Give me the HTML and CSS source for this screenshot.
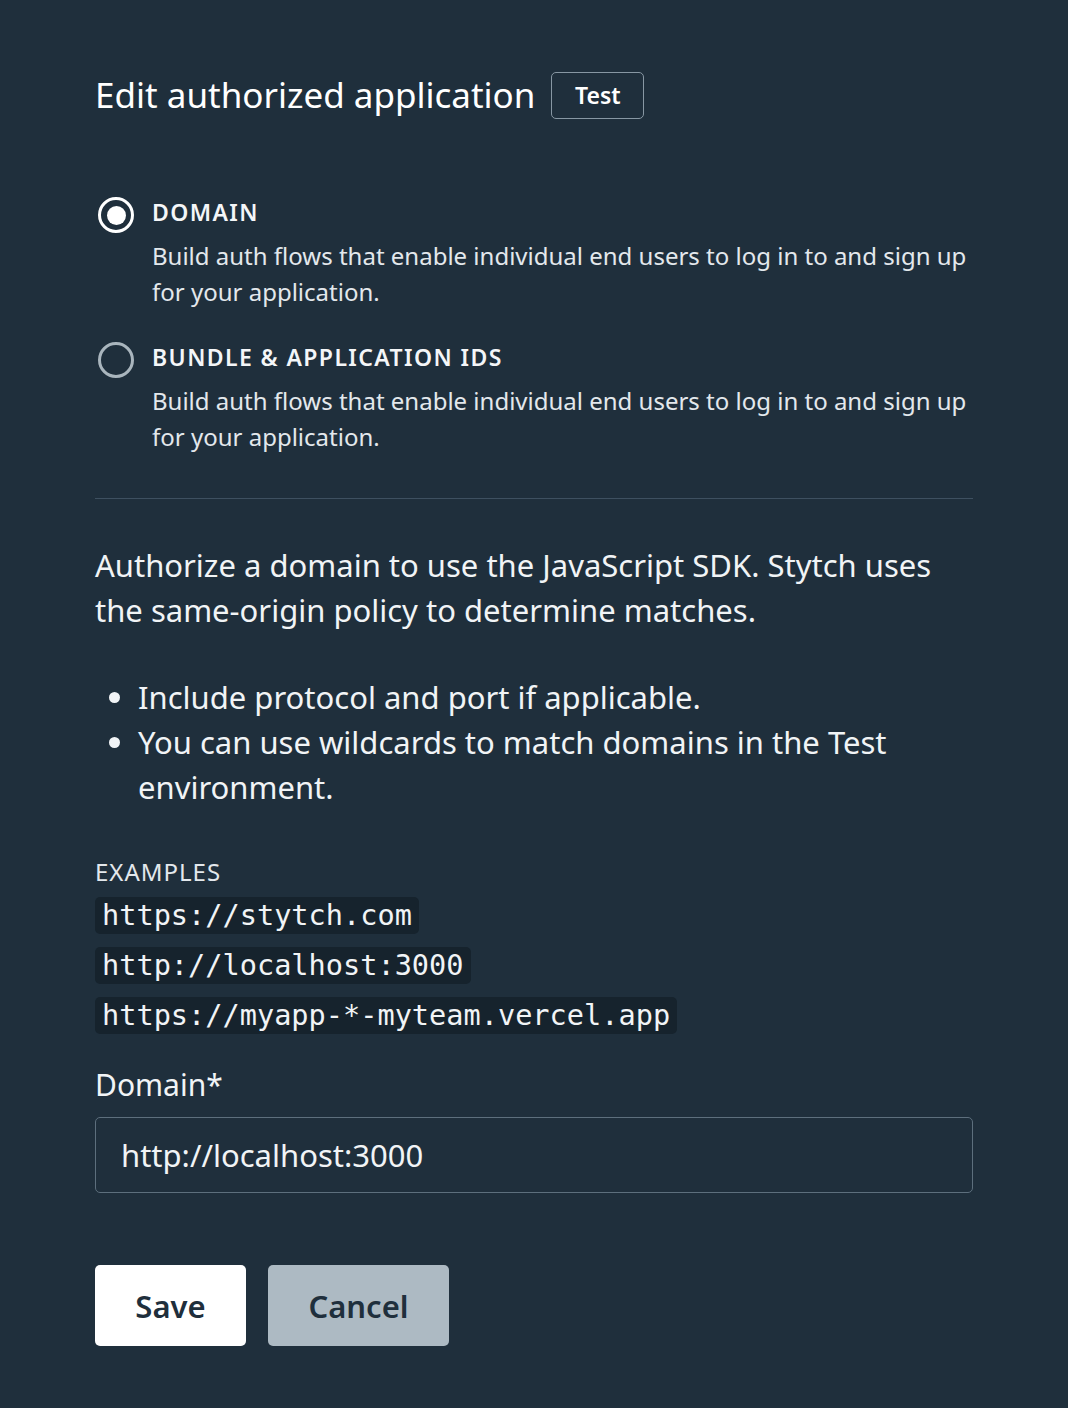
FILE: index.html
```html
<!DOCTYPE html>
<html>
<head>
<meta charset="utf-8">
<link rel="stylesheet" href="styles.css">
</head>
<body>
<div class="page">
  <div class="header">
    <h1 class="title">Edit authorized application</h1>
    <span class="badge">Test</span>
  </div>

  <div class="options">
    <div class="option">
      <span class="radio radio-on"><span class="dot"></span></span>
      <div class="option-body">
        <div class="option-label">DOMAIN</div>
        <div class="option-desc">Build auth flows that enable individual end users to log in to and sign up for your application.</div>
      </div>
    </div>
    <div class="option">
      <span class="radio radio-off"></span>
      <div class="option-body">
        <div class="option-label">BUNDLE &amp; APPLICATION IDS</div>
        <div class="option-desc">Build auth flows that enable individual end users to log in to and sign up for your application.</div>
      </div>
    </div>
  </div>

  <hr class="divider">

  <p class="intro">Authorize a domain to use the JavaScript SDK. Stytch uses the same-origin policy to determine matches.</p>

  <ul class="rules">
    <li>Include protocol and port if applicable.</li>
    <li>You can use wildcards to match domains in the Test environment.</li>
  </ul>

  <div class="examples">
    <div class="examples-label">EXAMPLES</div>
    <code class="code">https://stytch.com</code>
    <code class="code">http://localhost:3000</code>
    <code class="code">https://myapp-*-myteam.vercel.app</code>
  </div>

  <label class="field-label" for="domain">Domain*</label>
  <input class="field" id="domain" type="text" value="http://localhost:3000">

  <div class="actions">
    <button class="btn btn-save">Save</button>
    <button class="btn btn-cancel">Cancel</button>
  </div>
</div>
</body>
</html>
```

FILE: styles.css
```css
html, body {
  margin: 0;
  padding: 0;
  background: #1f2f3c;
}
body {
  font-family: "Noto Sans", "Liberation Sans", sans-serif;
  color: #ffffff;
}
.page {
  width: 878px;
  padding: 71px 95px 60px;
}
.header {
  display: flex;
  align-items: center;
  gap: 16px;
}
.title {
  margin: 0;
  font-size: 35px;
  font-weight: 400;
  line-height: 48px;
}
.badge {
  display: inline-flex;
  align-items: center;
  justify-content: center;
  width: 91px;
  height: 45px;
  border: 1px solid #8797a3;
  border-radius: 5px;
  font-size: 23px;
  font-weight: 600;
}
.options {
  margin-top: 78px;
  display: flex;
  flex-direction: column;
  gap: 32px;
}
.option {
  display: flex;
  gap: 18px;
}
.radio {
  flex: none;
  width: 36px;
  height: 36px;
  box-sizing: border-box;
  border-radius: 50%;
  display: flex;
  align-items: center;
  justify-content: center;
  margin-left: 3px;
}
.radio-on {
  border: 3px solid #ffffff;
}
.radio-on .dot {
  width: 19px;
  height: 19px;
  border-radius: 50%;
  background: #ffffff;
}
.radio-off {
  border: 3px solid #a9b5bd;
}
.option-label {
  font-size: 23px;
  font-weight: 600;
  letter-spacing: 1.4px;
  line-height: 30px;
  color: #f4f6f8;
}
.option-desc {
  margin-top: 11px;
  font-size: 24px;
  line-height: 36px;
  color: #e3e8ec;
}
.divider {
  margin: 43px 0 0;
  border: 0;
  border-top: 1px solid #3e5060;
}
.intro {
  margin: 44px 0 0;
  font-size: 31px;
  line-height: 45px;
  color: #f1f4f6;
}
.rules {
  margin: 42px 0 0;
  padding-left: 43px;
  font-size: 31px;
  line-height: 45px;
  color: #f1f4f6;
}
.examples {
  margin-top: 47px;
  display: flex;
  flex-direction: column;
  align-items: flex-start;
  gap: 13px;
}
.examples-label {
  font-size: 24px;
  line-height: 30px;
  letter-spacing: 1px;
  color: #e3e8ec;
  margin-bottom: -3px;
}
.code {
  font-family: "DejaVu Sans Mono", "Liberation Mono", monospace;
  font-size: 28.6px;
  line-height: 37px;
  padding: 0 7px;
  background: #16232d;
  border-radius: 5px;
  color: #f1f4f6;
}
.field-label {
  display: block;
  margin-top: 28px;
  font-size: 30px;
  line-height: 45px;
  color: #f1f4f6;
}
.field {
  display: block;
  box-sizing: border-box;
  width: 878px;
  height: 76px;
  margin-top: 10px;
  padding: 0 25px;
  background: #1f2f3c;
  border: 1px solid #5d6f7d;
  border-radius: 5px;
  font-family: inherit;
  font-size: 31px;
  color: #f1f4f6;
  outline: none;
}
.actions {
  margin-top: 72px;
  display: flex;
  gap: 22px;
}
.btn {
  height: 81px;
  border: 0;
  border-radius: 5px;
  font-family: inherit;
  font-size: 31px;
  font-weight: 600;
  color: #1f2f3c;
  padding: 0;
}
.btn-save {
  width: 151px;
  background: #ffffff;
}
.btn-cancel {
  width: 181px;
  background: #adbac3;
}
```
